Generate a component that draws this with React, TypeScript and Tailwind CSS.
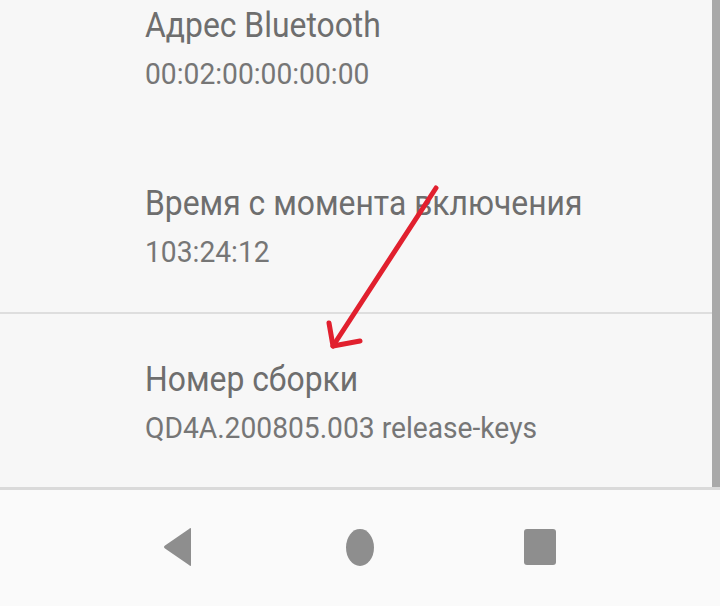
import React from "react";

type Item = { title: string; value: string };

const InfoItem: React.FC<{ item: Item; className: string }> = ({ item, className }) => (
  <div className={`pl-[145px] ${className}`}>
    <div className="text-[35px] leading-[48px] text-[#6e6e6e] whitespace-nowrap">
      <span className="inline-block origin-left scale-x-[0.91]">{item.title}</span>
    </div>
    <div className="text-[30px] leading-[48px] text-[#767676] whitespace-nowrap">
      <span className="inline-block origin-left scale-x-[0.94]">{item.value}</span>
    </div>
  </div>
);

const App: React.FC = () => {
  return (
    <div
      className="relative w-[720px] h-[606px] overflow-hidden bg-[#fafafa]"
      style={{ fontFamily: "Roboto, 'Noto Sans', sans-serif" }}
    >
      <div className="flex">
        <div className="flex-1 bg-[#f7f7f7]">
          <InfoItem item={{ title: "Адрес Bluetooth", value: "00:02:00:00:00:00" }} className="pt-[2px] pb-[82px]" />
          <InfoItem item={{ title: "Время с момента включения", value: "103:24:12" }} className="pb-[36px]" />
          <div className="h-[2px] bg-[#dedede]" />
          <InfoItem item={{ title: "Номер сборки", value: "QD4A.200805.003 release-keys" }} className="pt-[42px] pb-[35px]" />
        </div>
        <div className="w-[8px] bg-[#a9a9a9]" />
      </div>
      <div className="h-[3px] bg-[#dadada]" />

      {/* nav bar */}
      <div className="flex items-center h-[114px] pl-[163px]">
        <svg width="30" height="40" viewBox="0 0 30 40">
          <path d="M28 2 L28 38 Q28 40 26 38 L2 21.5 Q0 20 2 18.5 L26 2 Q28 0 28 2 Z" fill="#8e8e8e" />
        </svg>
        <svg className="ml-[153px]" width="28" height="37" viewBox="0 0 28 37">
          <ellipse cx="14" cy="18.5" rx="14" ry="18.5" fill="#8e8e8e" />
        </svg>
        <div className="ml-[150px] w-[32px] h-[36px] rounded-[3px] bg-[#8e8e8e]" />
      </div>

      {/* red annotation arrow */}
      <svg className="absolute left-0 top-0" width="720" height="606" viewBox="0 0 720 606">
        <g stroke="#e1202e" strokeWidth="5" strokeLinecap="round" strokeLinejoin="round" fill="none">
          <path d="M436 188 L333 346" />
          <path d="M329 323 L333 346 L360 341" />
        </g>
      </svg>
    </div>
  );
};

export default App;
